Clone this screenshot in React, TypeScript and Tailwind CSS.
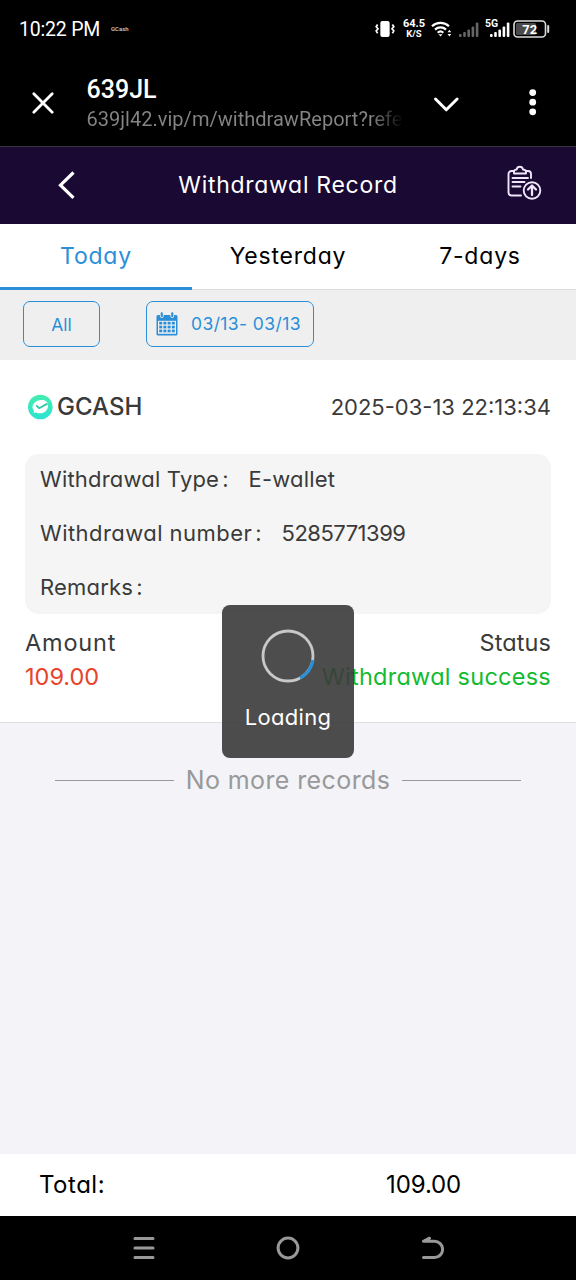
import type { ReactNode } from 'react'
import clsx from 'clsx'

const TABS = ['Today', 'Yesterday', '7-days']

const DETAILS = [
  { label: 'Withdrawal Type', value: 'E-wallet', labelClass: 'tracking-[0.2px]', valueClass: 'tracking-[0.2px]' },
  { label: 'Withdrawal number', value: '5285771399', labelClass: 'tracking-[0.45px]', valueClass: '-tracking-[0.5px]' },
  { label: 'Remarks', value: '', labelClass: 'tracking-[0.2px]', valueClass: '' },
]

function SignalBars({ color }: { color: string }) {
  return (
    <svg width="20" height="16" viewBox="0 0 20 16" fill={color}>
      <rect x="0" y="12" width="2.6" height="3" rx="1" />
      <rect x="4.2" y="10" width="2.6" height="5" rx="1" />
      <rect x="8.4" y="7.5" width="2.6" height="7.5" rx="1" />
      <rect x="12.6" y="4.5" width="2.6" height="10.5" rx="1" />
      <rect x="16.8" y="0.5" width="2.6" height="14.5" rx="1" />
    </svg>
  )
}

function StatusBar() {
  return (
    <div className="flex h-[58px] items-center bg-black pl-[19px] text-white">
      <span className="mt-[2px] w-[92px] text-[19.5px] tracking-[-0.2px] whitespace-nowrap">10:22 PM</span>
      <span className="text-[6px] leading-none font-medium text-gray-300">GCash</span>
      <div className="ml-auto flex h-full items-center pr-[25px]">
        <svg width="20" height="18" viewBox="0 0 20 18" fill="none" stroke="#fff" strokeWidth="1.7">
          <rect x="6.2" y="1.8" width="7.6" height="14.4" rx="1.2" fill="#fff" />
          <path d="M2.6 4.5 1.2 6.7l1.8 2-1.8 2.2 1.4 2.4M17.4 4.5l1.4 2.2-1.8 2 1.8 2.2-1.4 2.400" />
        </svg>
        <div className="ml-[8px] w-[22px] text-center text-[11px] leading-[10px] font-bold">
          64.5
          <br />
          <span className="text-[9.5px]">K/S</span>
        </div>
        <svg className="ml-[6px]" width="22" height="18" viewBox="0 0 22 18" fill="none" stroke="#fff" strokeWidth="2.2">
          <path d="M1 6.2a12.3 12.3 0 0 1 17 0M4 9.6a8 8 0 0 1 11 0M6.7 12.7a4.2 4.2 0 0 1 5.6 0" />
          <path d="m7.500 14.200 2 2.200 2-2.200z" fill="#fff" stroke="none" />
          <path d="m18.400 9.800 1.800 2.400h-3.600zM18.400 16.400l1.800-2.400h-3.600z" fill="#fff" stroke="none" />
        </svg>
        <span className="mt-[2px] ml-[6px]">
          <SignalBars color="#666" />
        </span>
        <div className="relative mt-[2px] ml-[11px]">
          <SignalBars color="#fff" />
          <span className="absolute -top-[3px] -left-[6px] bg-black px-[1px] text-[10.5px] leading-[10px] font-bold">5G</span>
        </div>
        <svg className="ml-[3px]" width="38" height="18" viewBox="0 0 38 18">
          <rect x="1" y="1" width="31.5" height="16" rx="3.5" fill="none" stroke="#ddd" strokeWidth="1.6" />
          <rect x="3" y="3" width="20" height="12" rx="1.5" fill="#4a4a4a" />
          <path d="M35.2 6v6" stroke="#ddd" strokeWidth="2" strokeLinecap="round" />
          <text x="16.7" y="13.6" fill="#fff" textAnchor="middle" className="text-[13px] font-bold">
            72
          </text>
        </svg>
      </div>
    </div>
  )
}

function BrowserBar() {
  return (
    <div className="flex h-[89px] items-start border-b border-[#37333b] bg-black text-white">
      <svg className="mt-[33px] ml-[31px] shrink-0" width="24" height="24" viewBox="0 0 24 24" stroke="#fff" strokeWidth="2.8" strokeLinecap="round">
        <path d="m2.8 2.8 18.4 18.4M21.2 2.8 2.8 21.2" />
      </svg>
      <div className="ml-[31.5px] w-[316.5px] overflow-hidden pt-[17px] whitespace-nowrap">
        <div className="text-[25px] leading-[30px] font-medium">639JL</div>
        <div className="bg-linear-to-r from-[#858585] from-90% to-transparent bg-clip-text text-[20px] leading-[29px] tracking-[0.02px] text-transparent">
          639jl42.vip/m/withdrawReport?refe
        </div>
      </div>
      <svg className="mt-[38px] ml-[29px] shrink-0" width="28" height="18" viewBox="0 0 28 18" fill="none" stroke="#fff" strokeWidth="3" strokeLinecap="round" strokeLinejoin="round">
        <path d="m3.5 3 10.8 10.8L25.1 3" />
      </svg>
      <svg className="mt-[30px] ml-[69px] shrink-0" width="8" height="28" viewBox="0 0 8 28" fill="#fff">
        <circle cx="3.7" cy="4.6" r="3.4" />
        <circle cx="3.7" cy="14.2" r="3.4" />
        <circle cx="3.7" cy="23.8" r="3.4" />
      </svg>
    </div>
  )
}

function PageHeader() {
  return (
    <header className="flex h-[77px] items-center bg-[#190933] text-white">
      <svg className="-mt-[2px] ml-[56px] shrink-0" width="20" height="30" viewBox="0 0 20 30" fill="none" stroke="#fff" strokeWidth="3.2">
        <path d="M17.5 2.5 4.5 15.2l13 12.6" />
      </svg>
      <h1 className="flex-1 pr-[6px] text-center text-[23px] tracking-[0.7px]">Withdrawal Record</h1>
      <svg className="-mt-[6px] mr-[34px] shrink-0" width="36" height="36" viewBox="0 0 36 36" fill="none" stroke="#eee6fa" strokeWidth="1.9" strokeLinecap="round" strokeLinejoin="round">
        <path d="M8 6H5.500a3 3 0 0 0-3 3v18.500a3 3 0 0 0 3 3h9.500M20 6h2a3 3 0 0 1 3 3v4" />
        <path d="M8 8.500V6.200c0-1.200 1.500-1.500 2.600-1.700C11 2.700 12.200 1.800 13.800 1.800S16.600 2.700 17 4.500c1.100.2 3 .5 3 1.700v2.300z" />
        <path d="M6.500 13h15.500M6.500 17h12M6.500 21.500h8" />
        <circle cx="26" cy="25.500" r="8.300" />
        <path d="M26 30v-9M22 24.500l4-4 4 4" strokeWidth="2.300" />
      </svg>
    </header>
  )
}

function CalendarIcon() {
  return (
    <svg width="22" height="24" viewBox="0 0 22 24" fill="#2b8fd8">
      <rect x="0.5" y="3" width="21" height="20.5" rx="1.5" />
      <rect x="3.9" y="-1" width="3.7" height="7" rx="1.8" fill="#efefef" />
      <rect x="14.4" y="-1" width="3.7" height="7" rx="1.8" fill="#efefef" />
      <rect x="4.7" y="0.3" width="2.1" height="4.9" rx="1" />
      <rect x="15.2" y="0.3" width="2.1" height="4.9" rx="1" />
      <rect x="2" y="8.8" width="18" height="13" fill="#efefef" />
      {[9.8, 13.7, 17.6].map((y) =>
        [3.2, 7.4, 11.6, 15.8].map((x) => <rect key={`${x}-${y}`} x={x} y={y} width="3" height="2.7" />)
      )}
    </svg>
  )
}

function FilterButton({ className, children }: { className: string; children: ReactNode }) {
  return (
    <button className={clsx('flex h-[46px] items-center rounded-[7px] border-[1.6px] border-[#2b8fd8] text-[17.5px] text-[#2b8fd8]', className)}>
      {children}
    </button>
  )
}

function RecordCard() {
  return (
    <section className="h-[363px] border-b border-[#dfdfe3] bg-white px-[25px] text-[22px] text-[#3a3a3a]">
      <div className="flex h-[94px] items-center justify-between">
        <div className="flex items-center pl-[2px]">
          <svg width="26" height="26" viewBox="0 0 26 26">
            <defs>
              <linearGradient id="gcash" x1="0" y1="0" x2="0" y2="1">
                <stop offset="0" stopColor="#45edae" />
                <stop offset="1" stopColor="#2be3d0" />
              </linearGradient>
            </defs>
            <circle cx="13.3" cy="13" r="12.3" fill="url(#gcash)" />
            <path d="M12.5 6.3c4.600-1 8.200.9 8.500 4.700.4 4.800-3.400 8.300-8 8.300-2 0-3.200-.7-4.500-.8l-2 .6.500-2.300c-3.700-4.400-.2-9.300 5.500-10.500z" fill="#fff" />
            <path d="m9.200 11.300 3 2.900 8.200-4.600" fill="none" stroke="#2fc9a8" strokeWidth="1.8" />
          </svg>
          <span className="ml-[4px] text-[24px] font-medium">GCASH</span>
        </div>
        <span>2025-03-13 22:13:34</span>
      </div>
      <div className="h-[160px] rounded-[14px] bg-[#f5f5f5] px-[15px]">
        {DETAILS.map((item) => (
          <div key={item.label} className="flex h-[54px] items-center pb-[4px]">
            <span className={item.labelClass}>{item.label}</span>
            <span className="mr-[20px] ml-[3px]">:</span>
            <span className={item.valueClass}>{item.value}</span>
          </div>
        ))}
      </div>
      <div className="flex justify-between pt-[12px] text-[23.5px]">
        <div>
          <p className="leading-[34px] tracking-[0.8px]">Amount</p>
          <p className="leading-[34px] text-[#e8432c]">109.00</p>
        </div>
        <div className="text-right">
          <p className="leading-[34px] tracking-[0.1px]">Status</p>
          <p className="leading-[34px] tracking-[0.25px] text-[#13bb2f]">Withdrawal success</p>
        </div>
      </div>
    </section>
  )
}

function LoadingToast() {
  return (
    <div className="absolute top-[605px] left-[222px] flex h-[153px] w-[132px] flex-col items-center rounded-[8px] bg-[#3a3a3a]/90 pt-[24px] text-white">
      <svg width="54" height="54" viewBox="0 0 54 54" fill="none" strokeWidth="2.8">
        <circle cx="27" cy="27" r="25" stroke="#c8c8c8" />
        <path d="M52 31a25 25 0 0 1-13 18" stroke="#2b8fd8" strokeWidth="3.2" />
      </svg>
      <span className="mt-[18px] font-[Inter,sans-serif] text-[22px] leading-[32px] tracking-[0.3px] [font-feature-settings:'cv11']">Loading</span>
    </div>
  )
}

function NavBar() {
  return (
    <nav className="flex h-16 items-center justify-between bg-black px-[132px]">
      <svg width="24" height="26" viewBox="0 0 24 26" stroke="#999" strokeWidth="3.1" strokeLinecap="round">
        <path d="M3 3.500h18M3 13h18M3 22.500h18" />
      </svg>
      <svg width="24" height="26" viewBox="0 0 24 26" fill="none" stroke="#999" strokeWidth="3">
        <circle cx="12" cy="13" r="9.900" />
      </svg>
      <svg width="24" height="26" viewBox="0 0 24 26" fill="none" stroke="#999" strokeWidth="3" strokeLinecap="round" strokeLinejoin="round">
        <path d="M9.500 3.200 3.500 6.300h11a8.100 8.100 0 0 1 0 16.200h-11" />
      </svg>
    </nav>
  )
}

export default function App() {
  return (
    <div className="relative flex h-[1280px] w-[576px] flex-col overflow-hidden bg-[#f3f3f8]">
      <div className="font-[Roboto,sans-serif]">
        <StatusBar />
        <BrowserBar />
      </div>
      {/* cv11 gives the single-storey "a" */}
      <div className="flex flex-1 flex-col font-[Inter,sans-serif] [font-feature-settings:'cv11']">
        <PageHeader />
        <div className="grid h-[66px] grid-cols-3 bg-white text-[23px] tracking-[0.8px]">
          {TABS.map((tab, i) => (
            <button key={tab} className={clsx('border-b', i === 0 ? 'border-b-[3px] border-[#2b8fd8] pt-px text-[#2b8fd8]' : 'border-[#dcdcdc] pb-px text-black')}>
              {tab}
            </button>
          ))}
        </div>
        <div className="flex h-[70px] items-center bg-[#efefef] pb-[2px] pl-[23px]">
          <FilterButton className="w-[77px] justify-center pt-[2px]">All</FilterButton>
          <FilterButton className="ml-[46px] w-[168px] pl-[9px]">
            <CalendarIcon />
            <span className="ml-[13px] tracking-[0.4px] whitespace-nowrap">03/13- 03/13</span>
          </FilterButton>
        </div>
        <RecordCard />
        <div className="flex items-center px-[55px] pt-[40px] text-[#999]">
          <div className="h-px flex-1 bg-[#999]" />
          <span className="mx-[12px] text-[25px] leading-[34px] tracking-[0.4px]">No more records</span>
          <div className="h-px flex-1 bg-[#999]" />
        </div>
        <div className="mt-auto flex h-[62px] items-center bg-white pl-[39px] text-[24px] text-black">
          <span className="w-[347px] tracking-[0.5px]">Total:</span>
          <span className="-tracking-[0.1px]">109.00</span>
        </div>
        <NavBar />
      </div>
      <LoadingToast />
    </div>
  )
}
